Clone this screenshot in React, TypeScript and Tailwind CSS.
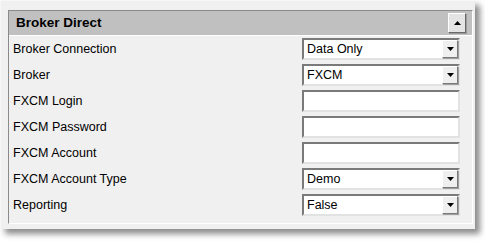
import React from "react";

const rows: { label: string; kind: "select" | "text"; value?: string }[] = [
  { label: "Broker Connection", kind: "select", value: "Data Only" },
  { label: "Broker", kind: "select", value: "FXCM" },
  { label: "FXCM Login", kind: "text" },
  { label: "FXCM Password", kind: "text" },
  { label: "FXCM Account", kind: "text" },
  { label: "FXCM Account Type", kind: "select", value: "Demo" },
  { label: "Reporting", kind: "select", value: "False" },
];

function DownArrow() {
  return (
    <svg width="7" height="4" viewBox="0 0 7 4" className="block">
      <path d="M0 0H7L3.5 4Z" fill="#000" />
    </svg>
  );
}

function UpArrow() {
  return (
    <svg width="7" height="4" viewBox="0 0 7 4" className="block">
      <path d="M0 4H7L3.5 0Z" fill="#000" />
    </svg>
  );
}

function Field({ kind, value }: { kind: "select" | "text"; value?: string }) {
  return (
    <div className="flex h-[22px] w-[158px] items-center border-2 border-t-[#7a7a7a] border-l-[#7a7a7a] border-b-[#e2e2e2] border-r-[#e2e2e2] bg-white">
      <div className="flex-1 pl-[3px] text-[12.5px] leading-none text-black">{value ?? ""}</div>
      {kind === "select" && (
        <div className="flex h-[18px] w-[16px] items-center justify-center border border-t-white border-l-white border-b-[#7a7a7a] border-r-[#7a7a7a] bg-[#efefef] shadow-[1px_1px_0_#a0a0a0]">
          <DownArrow />
        </div>
      )}
    </div>
  );
}

export default function App() {
  return (
    <div
      className="min-h-screen bg-white"
      style={{ fontFamily: '"Liberation Sans", Arial, sans-serif' }}
    >
      <div className="w-[475px] border-t border-l border-[#f7f7f7] bg-[#f0f0f0] pt-[9px] pl-[7px] pr-[2px] pb-[5px] shadow-[5px_5px_6px_rgba(0,0,0,0.45)]">
        <div className="border border-t-[#8a8a8a] border-l-[#8a8a8a] border-b-white border-r-white">
          <div className="flex h-[25px] items-center border-b border-white bg-[#c0c0c0] pl-[7px] pr-[6px]">
            <div className="flex-1 text-[13.5px] font-bold text-black">Broker Direct</div>
            <div className="flex h-[20px] w-[18px] items-center justify-center border border-t-white border-l-white border-b-[#6a6a6a] border-r-[#6a6a6a] bg-[#e4e4e4] shadow-[1px_1px_0_#9a9a9a]">
              <UpArrow />
            </div>
          </div>
          <div className="pb-[5px] pl-[4px]">
            {rows.map((r) => (
              <div key={r.label} className="flex h-[26px] items-center">
                <div className="w-[289px] text-[12.5px] text-black">{r.label}</div>
                <Field kind={r.kind} value={r.value} />
              </div>
            ))}
          </div>
        </div>
      </div>
    </div>
  );
}
